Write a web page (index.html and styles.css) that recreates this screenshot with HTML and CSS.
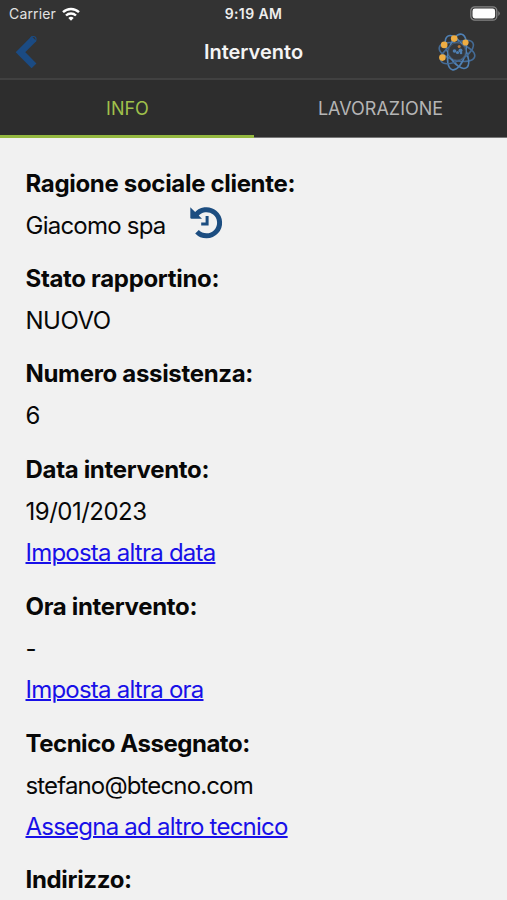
FILE: index.html
```html
<!DOCTYPE html>
<html lang="it">
<head>
<meta charset="utf-8">
<title>Intervento</title>
<link rel="stylesheet" href="styles.css">
</head>
<body>
<header class="top">
  <div class="status">
    <div class="carrier"><span>Carrier</span>
      <svg class="wifi" viewBox="0 0 18 14" width="18" height="14" fill="none" stroke="#fff" stroke-width="2.4"><path d="M1 5.2a11.6 11.6 0 0 1 16 0M4 8.5a7.2 7.2 0 0 1 10 0"/><path d="M9 13.7L6.3 11a3.9 3.9 0 0 1 5.4 0z" fill="#fff" stroke="none"/></svg>
    </div>
    <time class="clock">9:19 AM</time>
    <svg class="battery" viewBox="0 0 31 15" width="31" height="15"><rect x=".8" y=".8" width="26" height="13.4" rx="4" fill="none" stroke="#858585" stroke-width="1.3"/><rect x="2.5" y="2.5" width="22.6" height="10" rx="2.4" fill="#fff"/><path d="M28.3 5q3 2.5 0 5z" fill="#858585"/></svg>
  </div>
  <nav class="nav">
    <svg class="back" viewBox="0 0 24 34" width="24" height="34" fill="none" stroke="#1b4b83" stroke-width="6.8"><path d="M19 3.6L5.5 17.2L19 30.8"/><circle cx="18.3" cy="4.3" r=".5" stroke-width="5.5"/></svg>
    <h1 class="title">Intervento</h1>
    <svg class="atom" viewBox="0 0 40 40" width="40" height="40">
      <g fill="none" stroke="#4f80b4" stroke-width="1.6">
        <ellipse cx="20" cy="20" rx="18.3" ry="8.5" transform="rotate(15 20 20)" stroke="#446b96"/>
        <ellipse cx="20" cy="20" rx="18.3" ry="8.5" transform="rotate(60 20 20)"/>
        <ellipse cx="20" cy="20" rx="18.3" ry="8.5" transform="rotate(105 20 20)"/>
        <ellipse cx="20" cy="20" rx="18.3" ry="8.5" transform="rotate(150 20 20)" stroke="#446b96"/>
      </g>
      <circle cx="20" cy="19.5" r="8.5" fill="#35383c" stroke="#46515f"/>
      <g fill="#4f7fb1"><circle cx="17.5" cy="19" r="1.8"/><circle cx="23.5" cy="18.5" r="2"/><circle cx="20.5" cy="20.5" r="1.6"/><circle cx="24" cy="21" r="1.3"/></g>
      <g fill="#eead43"><circle cx="17.2" cy="6.6" r="3.3"/><circle cx="28.5" cy="10.5" r="3.1"/><circle cx="7.2" cy="12.9" r="3.3"/><circle cx="5.4" cy="25.6" r="3.3"/><circle cx="22.2" cy="14.6" r="1.5" fill="#b7793b"/></g>
    </svg>
  </nav>
</header>
<div class="tabs">
  <div class="tab active"><span>INFO</span></div>
  <div class="tab"><span>LAVORAZIONE</span></div>
</div>
<main class="content">
  <section><h2>Ragione sociale cliente:</h2>
    <p class="client"><span>Giacomo spa</span>
      <svg class="history" viewBox="0 0 34 34" width="34" height="34" fill="none" stroke="#1c4d80"><path d="M6.8 10.2A13.1 13.1 0 1 1 8 26.8" stroke-width="5"/><path d="M1.3 2.3L13 13.8H2.5q-1.2 0-1.2-1.2z" fill="#1c4d80" stroke="none"/><path d="M18.1 11V19H12.2" stroke-width="3"/></svg>
    </p></section>
  <section><h2>Stato rapportino:</h2><p class="wide">NUOVO</p></section>
  <section><h2>Numero assistenza:</h2><p>6</p></section>
  <section><h2>Data intervento:</h2><p class="wide">19/01/2023</p><p><a href="#">Imposta altra data</a></p></section>
  <section><h2>Ora intervento:</h2><p>-</p><p><a href="#">Imposta altra ora</a></p></section>
  <section><h2 class="tight">Tecnico Assegnato:</h2><p class="mail">stefano@btecno.com</p><p><a href="#">Assegna ad altro tecnico</a></p></section>
  <section><h2>Indirizzo:</h2></section>
</main>
</body>
</html>
```
FILE: styles.css
```css
* { box-sizing: border-box; }
body {
  margin: 0;
  height: 900px;
  overflow: hidden;
  background: #f1f1f1;
  color: #080808;
  font-family: Inter, "Liberation Sans", sans-serif;
}
h1, h2, p { margin: 0; }
svg { display: block; flex: none; }
.top {
  height: 80px;
  background: #333;
  border-bottom: 2px solid #414141;
}
.status {
  display: grid;
  grid-template-columns: 1fr auto 1fr;
  align-items: center;
  height: 27px;
  padding: 0 6px 0 9px;
  color: #fff;
}
.carrier {
  display: flex;
  align-items: center;
  gap: 6px;
  font-size: 14px;
  letter-spacing: .15px;
  color: #e2e2e2;
}
.clock { margin-left: -3px; font-size: 14px; font-weight: 600; letter-spacing: .4px; color: #eee; }
.battery { justify-self: end; }
.nav {
  display: grid;
  grid-template-columns: 1fr auto 1fr;
  align-items: center;
  height: 50px;
  padding: 0 15px;
}
.title { font-size: 20px; font-weight: 600; color: #f4f4f4; }
.atom { justify-self: end; margin-right: 15px; }
.tabs { display: flex; height: 58px; background: #2d2d2d; }
.tab {
  display: flex;
  flex: 1;
  align-items: center;
  justify-content: center;
  border-bottom: 1px solid #777;
  color: #b5b5b5;
  font-size: 18px;
}
.active { padding: 2px 0 0 1px; border-bottom: 3px solid #94b840; color: #9fc04b; }
.content { padding: 24.8px 25.5px 0; }
section { margin-bottom: 11.9px; }
h2, p { font-size: 24px; line-height: 41.7px; height: 41.7px; white-space: nowrap; }
h2 { font-weight: 700; letter-spacing: -.32px; }
.tight { letter-spacing: -.47px; }
p { padding-top: .4px; font-weight: 400; letter-spacing: -.77px; }
.wide { letter-spacing: -.5px; }
.mail { letter-spacing: -.85px; }
.client { display: flex; gap: 23px; }
a {
  color: #1810e8;
  text-decoration-thickness: 2px;
}
```
